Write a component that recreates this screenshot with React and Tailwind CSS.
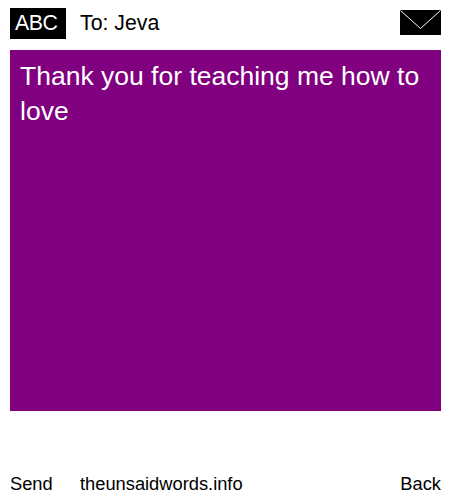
import React from "react";

const Envelope = () => (
  <svg width="41" height="25" viewBox="0 0 41 25" className="block">
    <rect width="41" height="25" fill="#000" />
    <path d="M0.5 0.5 L20.5 18.5 L40.5 0.5" fill="none" stroke="#fff" strokeWidth="1" />
  </svg>
);

export default function App() {
  return (
    <div className="w-[450px] h-[500px] bg-white text-black font-['Liberation_Sans',Arial,sans-serif] flex flex-col pl-[10px] pr-[9px]">
      {/* Header */}
      <div className="flex items-center h-[50px] pb-[3px]">
        <div className="w-[56px] h-[31px] bg-black text-white text-[21.3px] leading-[31px] tracking-[-0.4px] pl-[5px]">ABC</div>
        <div className="ml-[14px] text-[21.3px] leading-[31px]">To: Jeva</div>
        <div className="ml-auto mb-[3px]">
          <Envelope />
        </div>
      </div>

      {/* Message */}
      <div className="h-[361px] bg-[#800080] text-white text-[26.5px] leading-[35px] px-[10px] py-[9px]">
        Thank you for teaching me how to love
      </div>

      {/* Footer */}
      <div className="flex items-center justify-between mt-[61px] text-[18.3px] leading-[24px]">
        <div className="flex">
          <span className="w-[70px]">Send</span>
          <span>theunsaidwords.info</span>
        </div>
        <span>Back</span>
      </div>
    </div>
  );
}
